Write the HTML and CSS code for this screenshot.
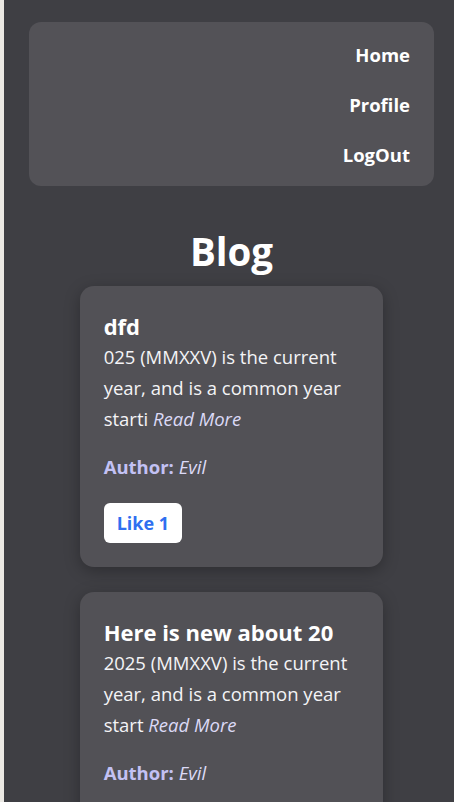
FILE: index.html
```html
<!DOCTYPE html>
<html lang="en">
<head>
<meta charset="utf-8">
<title>Blog</title>
<link rel="stylesheet" href="styles.css">
</head>
<body>
<div class="app">
  <nav class="nav">
    <a class="nav-link" href="#">Home</a>
    <a class="nav-link" href="#">Profile</a>
    <a class="nav-link" href="#">LogOut</a>
  </nav>
  <h1 class="page-title">Blog</h1>
  <div class="posts">
    <article class="card">
      <h2 class="card-title">dfd</h2>
      <p class="card-text">025 (MMXXV) is the current year, and is a common year starti <a class="read-more" href="#">Read More</a></p>
      <p class="author"><strong>Author:</strong> <em>Evil</em></p>
      <button class="like">Like 1</button>
    </article>
    <article class="card">
      <h2 class="card-title">Here is new about 20</h2>
      <p class="card-text">2025 (MMXXV) is the current year, and is a common year start <a class="read-more" href="#">Read More</a></p>
      <p class="author"><strong>Author:</strong> <em>Evil</em></p>
      <button class="like">Like 0</button>
    </article>
  </div>
</div>
</body>
</html>
```

FILE: styles.css
```css
html, body {
  margin: 0;
  padding: 0;
}
body {
  background: #ebe9e4;
  font-family: "Open Sans", "Noto Sans", sans-serif;
  color: #f4f4f6;
}
.app {
  margin-left: 4px;
  min-height: 100vh;
  background: #3f3f44;
  padding: 22px 20px 40px 25px;
  box-sizing: border-box;
}
.nav {
  background: #535257;
  border-radius: 12px;
  padding: 8px 24px 6px;
  display: flex;
  flex-direction: column;
  align-items: flex-end;
}
.nav-link {
  color: #ffffff;
  font-weight: 700;
  font-size: 18.5px;
  line-height: 50px;
  text-decoration: none;
}
.page-title {
  text-align: center;
  font-size: 38.5px;
  line-height: 48px;
  font-weight: 700;
  margin: 41px 0 11px;
  color: #ffffff;
}
.posts {
  display: flex;
  flex-direction: column;
  align-items: center;
  gap: 25px;
}
.card {
  width: 75%;
  box-sizing: border-box;
  background: #525156;
  border-radius: 14px;
  padding: 25px 24px 24px;
  box-shadow: 0 4px 16px rgba(0, 0, 0, 0.28);
}
.card-title {
  margin: 0;
  font-size: 22px;
  line-height: 30px;
  font-weight: 700;
  color: #ffffff;
}
.card-text {
  margin: 0;
  font-size: 18.5px;
  line-height: 31px;
  color: #f4f4f6;
}
.read-more {
  font-style: italic;
  color: #dcdaf6;
  text-decoration: none;
}
.author {
  margin: 17px 0 0;
  font-size: 18.5px;
  line-height: 31px;
  color: #dcdaf6;
}
.author strong {
  color: #c3c1f4;
}
.like {
  display: block;
  margin-top: 21px;
  height: 40px;
  padding: 0 13px;
  background: #ffffff;
  border: none;
  border-radius: 6px;
  color: #2f6ff0;
  font-family: inherit;
  font-size: 18px;
  font-weight: 700;
}
```
